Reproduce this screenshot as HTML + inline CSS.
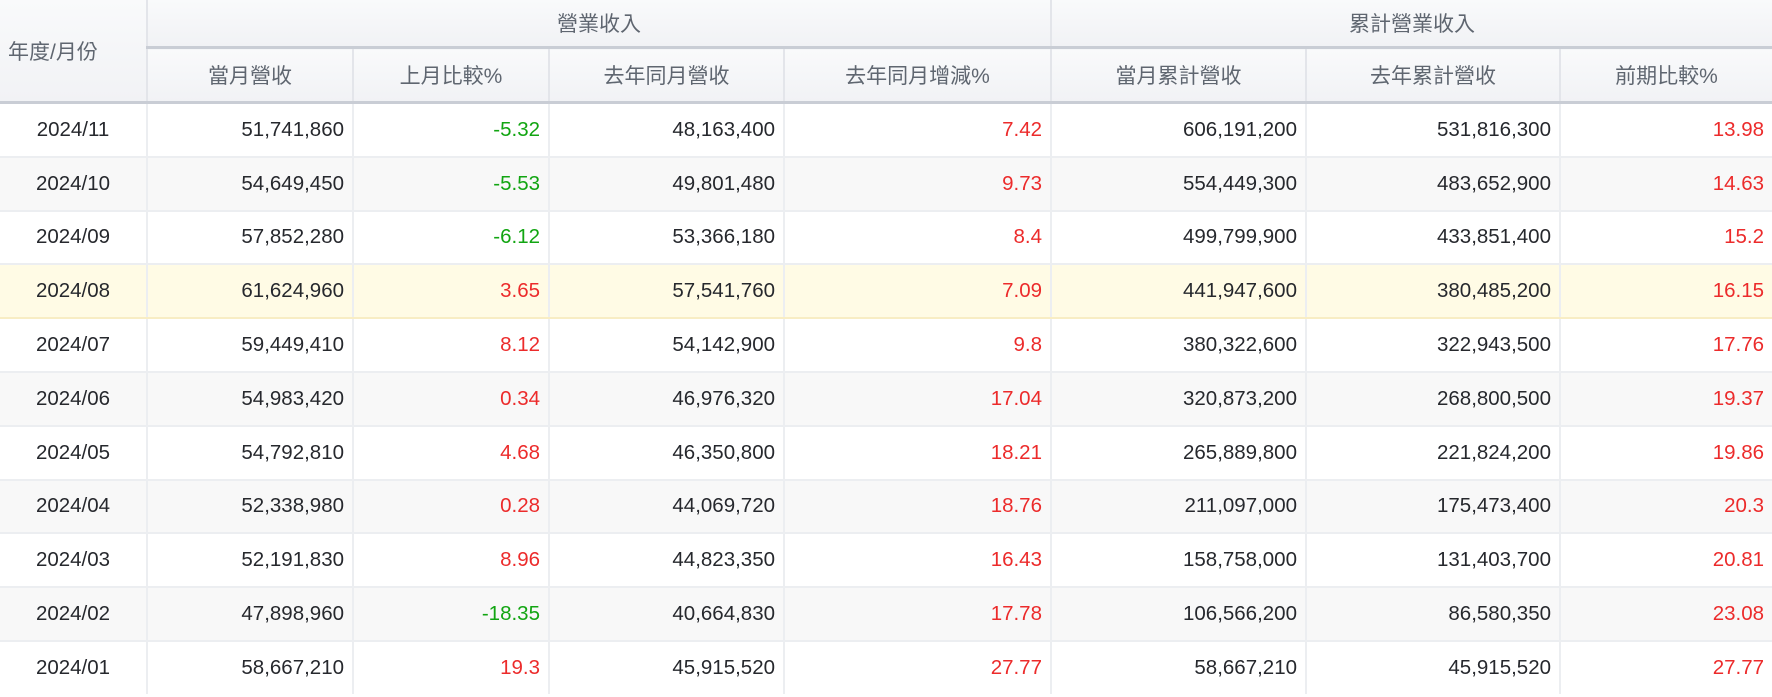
<!DOCTYPE html>
<html><head><meta charset="utf-8"><style>
body{margin:0;width:1772px;height:697px;overflow:hidden;background:#fff;font-family:"Liberation Sans","Noto Sans CJK TC",sans-serif;}
table{border-collapse:collapse;table-layout:fixed;width:1772px;}
th{background:linear-gradient(#f9fafb,#f1f2f5);color:#5f6670;font-weight:normal;font-size:21px;border:2px solid #e3e5ea;border-top:none;padding:0;}
th.g{height:46px;border-bottom:3px solid #c9cdd5;}
tr.h2 th{height:52px;border-bottom:3px solid #c9cdd5;}
th.first{text-align:left;padding-left:8px;border-left:none;border-bottom:3px solid #c9cdd5;}
td{height:51.8px;font-size:20.5px;color:#26282d;text-align:right;padding:0 8px;border:2px solid #eceef1;}
td:first-child{text-align:center;border-left:none;padding:0;}
tr:last-child td{border-bottom:none;}
td:last-child,th:last-child{border-right:none;}
tbody tr:nth-child(even) td{background:#f8f8f8;}
tbody tr.hl td{background:#fffbe5;border-top-color:#f8edc4;border-bottom-color:#f8edc4;}
.r{color:#ec2b2b}.gn{color:#12a512}
</style></head><body>
<table>
<colgroup><col style="width:147px"><col style="width:206px"><col style="width:196px"><col style="width:235px"><col style="width:267px"><col style="width:255px"><col style="width:254px"><col style="width:212px"></colgroup>
<thead>
<tr><th rowspan="2" class="first">年度/月份</th><th colspan="4" class="g">營業收入</th><th colspan="3" class="g">累計營業收入</th></tr>
<tr class="h2"><th>當月營收</th><th>上月比較%</th><th>去年同月營收</th><th>去年同月增減%</th><th>當月累計營收</th><th>去年累計營收</th><th>前期比較%</th></tr>
</thead>
<tbody>
<tr><td>2024/11</td><td>51,741,860</td><td class="gn">-5.32</td><td>48,163,400</td><td class="r">7.42</td><td>606,191,200</td><td>531,816,300</td><td class="r">13.98</td></tr>
<tr><td>2024/10</td><td>54,649,450</td><td class="gn">-5.53</td><td>49,801,480</td><td class="r">9.73</td><td>554,449,300</td><td>483,652,900</td><td class="r">14.63</td></tr>
<tr><td>2024/09</td><td>57,852,280</td><td class="gn">-6.12</td><td>53,366,180</td><td class="r">8.4</td><td>499,799,900</td><td>433,851,400</td><td class="r">15.2</td></tr>
<tr class="hl"><td>2024/08</td><td>61,624,960</td><td class="r">3.65</td><td>57,541,760</td><td class="r">7.09</td><td>441,947,600</td><td>380,485,200</td><td class="r">16.15</td></tr>
<tr><td>2024/07</td><td>59,449,410</td><td class="r">8.12</td><td>54,142,900</td><td class="r">9.8</td><td>380,322,600</td><td>322,943,500</td><td class="r">17.76</td></tr>
<tr><td>2024/06</td><td>54,983,420</td><td class="r">0.34</td><td>46,976,320</td><td class="r">17.04</td><td>320,873,200</td><td>268,800,500</td><td class="r">19.37</td></tr>
<tr><td>2024/05</td><td>54,792,810</td><td class="r">4.68</td><td>46,350,800</td><td class="r">18.21</td><td>265,889,800</td><td>221,824,200</td><td class="r">19.86</td></tr>
<tr><td>2024/04</td><td>52,338,980</td><td class="r">0.28</td><td>44,069,720</td><td class="r">18.76</td><td>211,097,000</td><td>175,473,400</td><td class="r">20.3</td></tr>
<tr><td>2024/03</td><td>52,191,830</td><td class="r">8.96</td><td>44,823,350</td><td class="r">16.43</td><td>158,758,000</td><td>131,403,700</td><td class="r">20.81</td></tr>
<tr><td>2024/02</td><td>47,898,960</td><td class="gn">-18.35</td><td>40,664,830</td><td class="r">17.78</td><td>106,566,200</td><td>86,580,350</td><td class="r">23.08</td></tr>
<tr><td>2024/01</td><td>58,667,210</td><td class="r">19.3</td><td>45,915,520</td><td class="r">27.77</td><td>58,667,210</td><td>45,915,520</td><td class="r">27.77</td></tr>
</tbody></table>
</body></html>
